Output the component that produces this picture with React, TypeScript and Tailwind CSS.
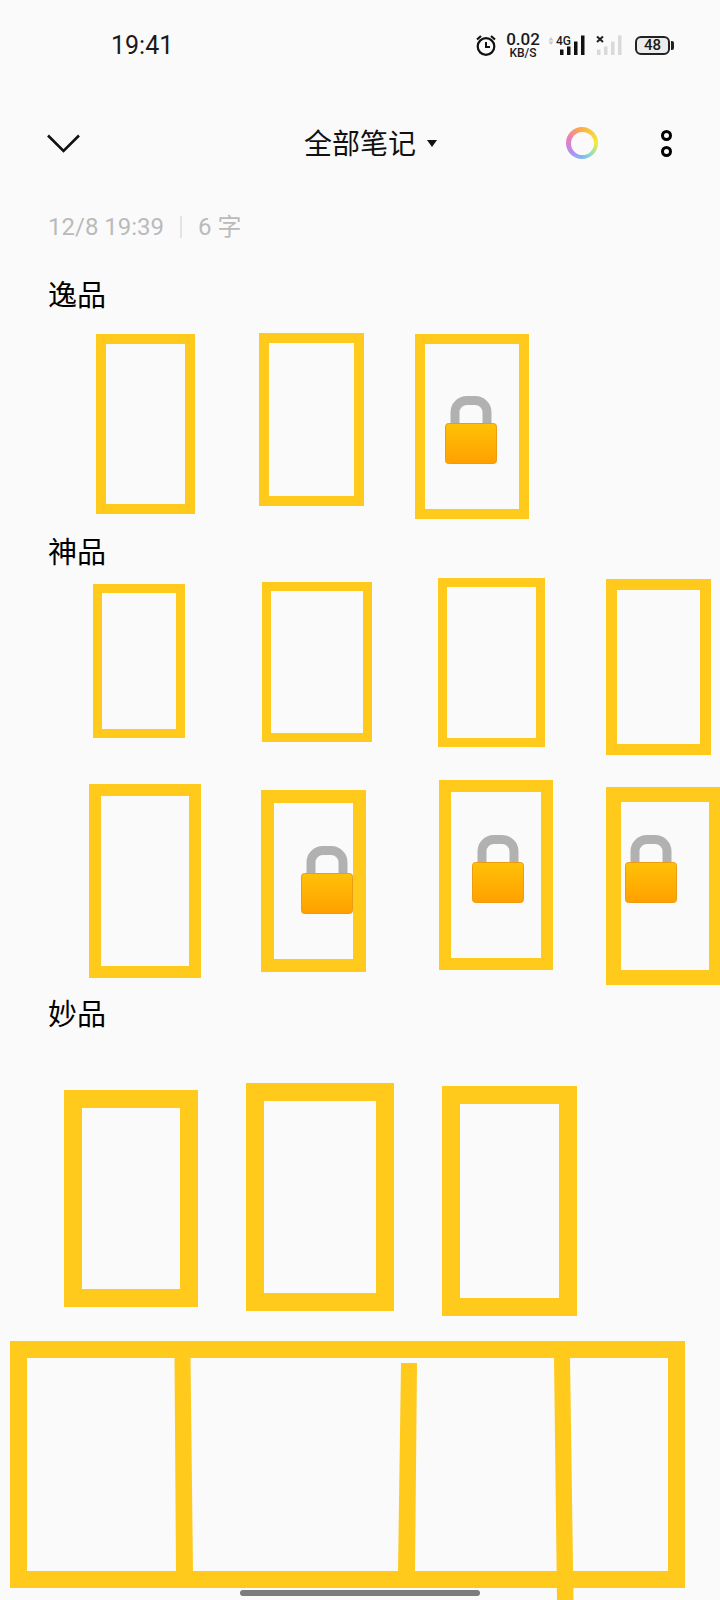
import type { ReactNode } from "react";

const sans = "font-['Roboto','Noto_Sans_CJK_SC',sans-serif]";

// padlock emoji, 52x68
const Lock = ({ className }: { className: string }) => (
  <svg className={`absolute ${className}`} width="52" height="68" viewBox="0 0 52 68">
    <defs>
      <linearGradient id="lockBody" x1="0" y1="0" x2="0" y2="1">
        <stop offset="0" stopColor="#ffc107" />
        <stop offset="1" stopColor="#ffa000" />
      </linearGradient>
    </defs>
    <path d="M10 30V17a12 12 0 0 1 12-12.5h8A12 12 0 0 1 42 17v13" fill="none" stroke="#b1b1b1" strokeWidth="9" />
    <rect x="0.5" y="27.5" width="51" height="40" rx="3" fill="url(#lockBody)" stroke="#eb9c12" />
  </svg>
);

const Tofu = ({ className, children }: { className: string; children?: ReactNode }) => (
  <div className={`relative shrink-0 border-[#ffca1c] ${className}`}>{children}</div>
);

const Label = ({ children }: { children: ReactNode }) => (
  <div className="h-[40px] pl-[48px] pt-[4px] flex items-center text-[29px] text-black">{children}</div>
);

const App = () => {
  return (
    <div className={`relative h-[1600px] w-[720px] overflow-hidden bg-[#fafafa] ${sans}`}>
      {/* Status bar */}
      <div className="h-[90px] flex items-center pl-[111px] pr-[46px] text-[#1a1a1a]">
        <span className="text-[25px] leading-none">19:41</span>
        <div className="ml-auto flex items-center">
          <svg width="22" height="22" viewBox="0 0 22 22" fill="none" stroke="#111" strokeWidth="2.2">
            <circle cx="11" cy="12.5" r="8.3" />
            <path d="M11 8v5h4" strokeWidth="2" />
            <path d="M2 5.5 6 2M20 5.5 16 2" />
          </svg>
          <div className="ml-[9px] w-[34px] flex flex-col items-center font-medium">
            <span className="text-[17px] leading-[15px]">0.02</span>
            <span className="text-[12px] leading-[12px]">KB/S</span>
          </div>
          <svg className="ml-[7px]" width="41" height="24" viewBox="0 0 41 24">
            <path d="M1.5 7.5 4 4l2.5 3.5zM1.5 8.5 4 12l2.5-3.5z" fill="#c9c9c9" />
            <text x="9" y="12" fontSize="12" fontWeight="500" fill="#1a1a1a" fontFamily="Roboto">4G</text>
            <path d="M13 16.5h3.5V22H13zM20 13.5h3.5V22H20zM27 8.5h3.5V22H27zM34 2.5h3.5V22H34z" fill="#111" />
          </svg>
          <svg className="ml-[8px]" width="30" height="24" viewBox="0 0 30 24">
            <path d="M1 3.5 7 9M7 3.5 1 9" stroke="#222" strokeWidth="2" />
            <path d="M1 16.5h3.5V22H1zM8 13.5h3.5V22H8zM15 8.5h3.5V22H15zM22 2.5h3.5V22H22z" fill="#d9d9d9" />
          </svg>
          <div className="ml-[9px] flex items-center">
            <div className="h-[19px] w-[35px] rounded-[6px] border-2 border-[#222] bg-[#ececec] flex items-center justify-center text-[15px] font-medium leading-none">
              48
            </div>
            <div className="ml-[1px] h-[9px] w-[3px] rounded-r-[2px] bg-[#222]" />
          </div>
        </div>
      </div>

      {/* Toolbar */}
      <div className="h-[106px] flex items-center pl-[47px]">
        <svg width="33" height="19" viewBox="0 0 33 19" fill="none" stroke="#111" strokeWidth="2.6">
          <path d="M1 1.5 16.5 17 32 1.5" />
        </svg>
        <span className="ml-[224px] mt-[3px] text-[28px] leading-none text-[#111]">全部笔记</span>
        <svg className="ml-[11px]" width="10" height="7" viewBox="0 0 10 7">
          <path d="M0 0h10L5 7z" fill="#111" />
        </svg>
        <div className="ml-[129px] h-[32px] w-[32px] rounded-full bg-[conic-gradient(#fbb040,#f4ec3c_25%,#8fd9c4_40%,#7fb8f5_50%,#b98af0_65%,#f07fb0_82%,#fbb040)] flex items-center justify-center">
          <div className="h-[23px] w-[23px] rounded-full bg-[#fafafa]" />
        </div>
        <div className="ml-[63px] flex flex-col gap-[5px]">
          <div className="h-[11px] w-[11px] rounded-full border-[3px] border-black" />
          <div className="h-[11px] w-[11px] rounded-full border-[3px] border-black" />
        </div>
      </div>

      {/* Meta */}
      <div className="h-[62px] flex items-center pl-[48px] text-[24px] leading-none text-[#bababa]">
        <span>12/8 19:39</span>
        <div className="ml-[16px] h-[22px] w-[2px] bg-[#e4e4e4]" />
        <span className="ml-[16px]">6 字</span>
      </div>

      <div className="mt-[17px]">
        <Label>逸品</Label>
      </div>
      <div className="h-[217px] flex items-start">
        <Tofu className="ml-[96px] mt-[19px] h-[180px] w-[99px] border-[10px]" />
        <Tofu className="ml-[64px] mt-[18px] h-[173px] w-[105px] border-[10px]" />
        <Tofu className="ml-[51px] mt-[19px] h-[185px] w-[114px] border-[10px]">
          <Lock className="left-[20px] top-[52px]" />
        </Tofu>
      </div>

      <Label>神品</Label>
      <div className="h-[204px] flex items-start">
        <Tofu className="ml-[93px] mt-[12px] h-[154px] w-[92px] border-[9px]" />
        <Tofu className="ml-[77px] mt-[10px] h-[160px] w-[110px] border-[9px]" />
        <Tofu className="ml-[66px] mt-[6px] h-[169px] w-[107px] border-[9px]" />
        <Tofu className="ml-[61px] mt-[7px] h-[176px] w-[105px] border-[11px]" />
      </div>
      <div className="h-[218px] flex items-start">
        <Tofu className="ml-[89px] mt-[8px] h-[194px] w-[112px] border-[12px]" />
        <Tofu className="ml-[60px] mt-[14px] h-[182px] w-[105px] border-[13px]">
          <Lock className="left-[27px] top-[43px]" />
        </Tofu>
        <Tofu className="ml-[73px] mt-[4px] h-[190px] w-[114px] border-[12px]">
          <Lock className="left-[21px] top-[43px]" />
        </Tofu>
        <Tofu className="ml-[53px] mt-[11px] h-[198px] w-[118px] border-[15px]">
          <Lock className="left-[4px] top-[33px]" />
        </Tofu>
      </div>

      <Label>妙品</Label>
      <div className="h-[307px] flex items-start">
        <Tofu className="ml-[64px] mt-[56px] h-[217px] w-[134px] border-[18px]" />
        <Tofu className="ml-[48px] mt-[49px] h-[228px] w-[148px] border-[18px]" />
        <Tofu className="ml-[48px] mt-[52px] h-[230px] w-[135px] border-[18px]" />
      </div>

      {/* Large stretched glyph at the bottom */}
      <svg className="block" width="720" height="259" viewBox="0 0 720 259" fill="#ffca1c">
        <path fillRule="evenodd" d="M10 0H685V247H10ZM27 17V230H668V17Z" />
        <path d="M174.5 16h16l2.5 215h-17zM401 22h16l-2 209h-17zM554 16h16l3.5 243H557z" />
      </svg>

      {/* Home indicator */}
      <div className="absolute bottom-[4px] left-[240px] h-[6px] w-[240px] rounded-full bg-[#7c7c7c]" />
    </div>
  );
};

export default App;
